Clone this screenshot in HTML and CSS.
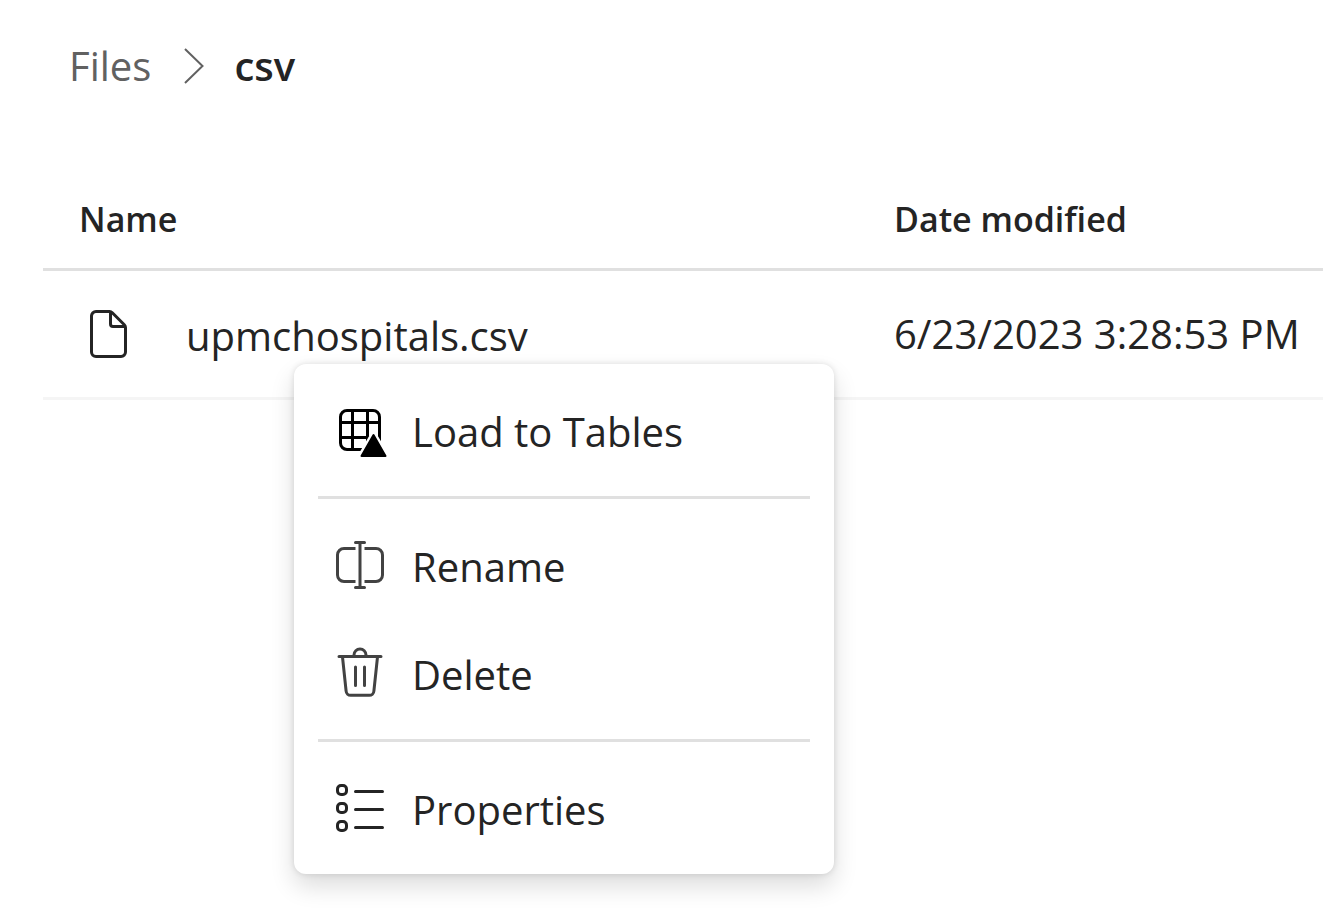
FILE: index.html
```html
<!DOCTYPE html>
<html lang="en">
<head>
<meta charset="utf-8">
<meta name="viewport" content="width=device-width, initial-scale=1">
<title>Files</title>
<link rel="stylesheet" href="styles.css">
</head>
<body>
<main class="explorer">
  <nav class="breadcrumb" aria-label="Breadcrumb">
    <a class="crumb" href="#files">Files</a>
    <svg class="chevron" viewBox="0 0 22 38" aria-hidden="true"><path d="M2 2 19.500 19 2 36"/></svg>
    <span class="crumb-current" aria-current="page">csv</span>
  </nav>

  <table class="files">
    <thead>
      <tr><th class="col-name" scope="col">Name</th><th class="col-date" scope="col">Date modified</th></tr>
    </thead>
    <tbody>
      <tr>
        <td>
          <div class="file">
            <svg class="icon" viewBox="0 0 60 60" aria-hidden="true"><path d="M16 7.500h13.500a4 4 0 0 1 2.800 1.200l12 12a4 4 0 0 1 1.200 2.800V48a4.500 4.500 0 0 1-4.500 4.500H16a4.500 4.500 0 0 1-4.500-4.500V12A4.500 4.500 0 0 1 16 7.500zM30.500 8v12a2.500 2.500 0 0 0 2.500 2.500h12"/></svg>
            <span class="file-name">upmchospitals.csv</span>
          </div>
        </td>
        <td>6/23/2023 3:28:53 PM</td>
      </tr>
    </tbody>
  </table>

  <div class="menu" role="menu" aria-label="File actions">
    <button class="menu-item" type="button" role="menuitem">
      <svg class="icon icon-black" viewBox="0 0 60 60" aria-hidden="true"><rect x="10.500" y="10.500" width="39" height="39" rx="6.500"/><path d="M22.500 10v40M37.500 10v40M10 22.500h40M10 37.500h40"/><path class="halo" d="M43.500 35.500 31.500 56h24z"/><path class="solid" d="M43.500 35 31.500 56h24z"/></svg>
      <span class="menu-label">Load to Tables</span>
    </button>
    <hr class="menu-divider">
    <button class="menu-item" type="button" role="menuitem">
      <svg class="icon icon-gray" viewBox="0 0 60 60" aria-hidden="true"><path d="M25.500 13.500H14A6.500 6.500 0 0 0 7.500 20v20a6.500 6.500 0 0 0 6.500 6.500h11.500M34.500 13.500H46a6.500 6.500 0 0 1 6.500 6.500v20a6.500 6.500 0 0 1-6.500 6.500H34.500"/><path class="round" d="M30 7.500v45M25.500 7.500h9M25.500 52.500h9"/></svg>
      <span class="menu-label">Rename</span>
    </button>
    <button class="menu-item" type="button" role="menuitem">
      <svg class="icon icon-gray" viewBox="0 0 60 60" aria-hidden="true"><path class="round" d="M9 13.500h42M24 13v-1a6 6 0 0 1 12 0v1M12.500 14l3.600 34a4.600 4.600 0 0 0 4.600 4.300h18.600a4.600 4.600 0 0 0 4.600-4.300l3.600-34M25.500 24v18.500M34.500 24v18.500"/></svg>
      <span class="menu-label">Delete</span>
    </button>
    <hr class="menu-divider">
    <button class="menu-item" type="button" role="menuitem">
      <svg class="icon" viewBox="0 0 60 60" aria-hidden="true"><rect x="7.500" y="7.500" width="9" height="9" rx="3.500"/><rect x="7.500" y="25.500" width="9" height="9" rx="3.500"/><rect x="7.500" y="43.500" width="9" height="9" rx="3.500"/><path class="round" d="M25.500 13.500h27M25.500 31.500h27M25.500 49.500h27"/></svg>
      <span class="menu-label">Properties</span>
    </button>
  </div>
</main>
</body>
</html>
```
FILE: styles.css
```css
* {
  box-sizing: border-box;
}

body {
  margin: 0;
  background: #fff;
  color: #242424;
  font-family: "Segoe UI", "Open Sans", sans-serif;
  font-size: 40px;
  line-height: 56px;
}

.explorer {
  position: relative;
  min-height: 100vh;
  padding: 38px 0 24px 43px;
}

.breadcrumb {
  display: flex;
  align-items: center;
  padding-left: 26px;
}

.crumb {
  color: #616161;
  text-decoration: none;
}

.chevron {
  width: 22px;
  height: 38px;
  margin: 0 29px 0 32px;
  fill: none;
  stroke: #616161;
  stroke-width: 2;
}

.crumb-current {
  font-weight: 600;
}

.files {
  width: 100%;
  margin-top: 76px;
  table-layout: fixed;
  border-collapse: separate;
  border-spacing: 0;
}

.files th {
  height: 101px;
  padding: 0;
  border-bottom: 3px solid #e0e0e0;
  font-size: 34px;
  font-weight: 600;
  text-align: left;
}

.files .col-name {
  padding-left: 36px;
}

.files .col-date {
  width: 429px;
}

.files td {
  height: 129px;
  padding: 0;
  border-bottom: 3px solid #f5f5f5;
  white-space: nowrap;
}

.file {
  display: flex;
  align-items: center;
  padding-left: 37px;
}

.file-name {
  padding: 4px 0 0 46px;
}

.icon {
  flex: none;
  width: 60px;
  height: 60px;
  fill: none;
  stroke: #242424;
  stroke-width: 3;
}

.icon-black {
  stroke: #000;
}

.icon-gray {
  stroke: #424242;
}

.round {
  stroke-linecap: round;
}

.halo {
  fill: #fff;
  stroke: #fff;
  stroke-width: 7;
}

.solid {
  fill: #000;
  stroke-width: 2;
  stroke-linejoin: round;
}

.menu {
  position: absolute;
  top: 364px;
  left: 294px;
  width: 540px;
  padding: 12px;
  border-radius: 12px;
  background: #fff;
  box-shadow: 0 0 6px rgba(0, 0, 0, 0.12), 0 12px 24px rgba(0, 0, 0, 0.14);
}

.menu-item {
  display: flex;
  align-items: center;
  gap: 22px;
  width: 100%;
  height: 108px;
  padding: 0 24px;
  border: 0;
  background: none;
  color: inherit;
  font: inherit;
  text-align: left;
}

.menu-label {
  padding-top: 4px;
}

.menu-divider {
  height: 3px;
  margin: 12px;
  border: 0;
  background: #e0e0e0;
}
```
